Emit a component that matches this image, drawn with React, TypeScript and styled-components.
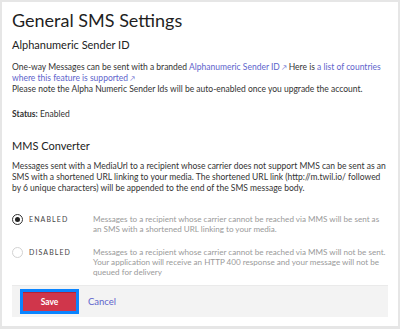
import React from "react";
import styled, { createGlobalStyle } from "styled-components";

const Global = createGlobalStyle`
  html, body { margin: 0; padding: 0; background: #e6e6e6; }
  body { font-family: Lato, "Open Sans", "Liberation Sans", sans-serif; color: #2a2a2a; }
  * { box-sizing: border-box; }
`;

const Panel = styled.div`
  margin: 2px 2px 3px 2px;
  height: 324px;
  background: #fff;
  padding: 0 10px 9px 10px;
  display: flex;
  flex-direction: column;
`;

const Title = styled.h1`
  margin: 6px 0 0 0;
  font-size: 18px;
  font-weight: 400;
  line-height: 24px;
  color: #1f1f1f;
`;

const SectionTitle = styled.h2<{ $top: number }>`
  margin: ${(p) => p.$top}px 0 0 0;
  font-size: 11px;
  font-weight: 400;
  line-height: 14px;
  color: #222;
`;

const Para = styled.p<{ $top: number }>`
  margin: ${(p) => p.$top}px 0 0 0;
  font-size: 8.5px;
  line-height: 11px;
  color: #333;
`;

const Link = styled.a`
  color: #6064cc;
  text-decoration: none;
`;

const Ext = styled.span`
  display: inline-block;
  font-size: 6.5px;
  line-height: 1;
  margin: 0 2px 0 2px;
`;

const Bold = styled.b`
  font-weight: 700;
`;

const OptionRow = styled.div<{ $top: number }>`
  margin-top: ${(p) => p.$top}px;
  display: grid;
  grid-template-columns: 81px 1fr;
  align-items: start;
`;

const OptionLabel = styled.label`
  display: flex;
  align-items: center;
  gap: 6px;
  height: 10px;
  font-size: 7px;
  letter-spacing: 1.1px;
  color: #444;
  text-transform: uppercase;
`;

const Radio = styled.span<{ $checked?: boolean }>`
  width: 11px;
  height: 11px;
  border-radius: 50%;
  border: 1px solid ${(p) => (p.$checked ? "#333" : "#d2d2d2")};
  display: flex;
  align-items: center;
  justify-content: center;
  flex: none;
  &::after {
    content: "";
    display: ${(p) => (p.$checked ? "block" : "none")};
    width: 5px;
    height: 5px;
    border-radius: 50%;
    background: #222;
  }
`;

const OptionDesc = styled.div`
  font-size: 8.1px;
  line-height: 10px;
  color: #9a9a9a;
`;

const Footer = styled.div`
  margin-top: auto;
  height: 32px;
  background: #f3f3f3;
  border-top: 1px solid #eaeaea;
  display: flex;
  align-items: center;
  padding-left: 8px;
  gap: 9px;
`;

const SaveButton = styled.button`
  width: 59px;
  height: 25px;
  background: #d0364b;
  border: 3px solid #0a84ff;
  box-shadow: inset 0 1px 0 #b52238;
  color: #fff;
  font-family: inherit;
  font-size: 8.5px;
  font-weight: 700;
  padding: 0;
`;

const CancelLink = styled.a`
  font-size: 9.5px;
  color: #6064cc;
`;

const mmsText =
  "Messages sent with a MediaUrl to a recipient whose carrier does not support MMS can be sent as an SMS with a shortened URL linking to your media. The shortened URL link (http://m.twil.io/ followed by\u00a06 unique characters) will be appended to the end of the SMS message body.";

export default function App() {
  return (
    <>
      <Global />
      <Panel>
        <Title>General SMS Settings</Title>
        <SectionTitle $top={6}>Alphanumeric Sender ID</SectionTitle>
        <Para $top={10}>
          One-way Messages can be sent with a branded{" "}
          <Link>Alphanumeric Sender ID<Ext>↗</Ext></Link>Here is{" "}
          <Link>a list of countries where this feature is supported<Ext>↗</Ext></Link>
          <br />
          Please note the Alpha Numeric Sender Ids will be auto-enabled once you upgrade the account.
        </Para>
        <Para $top={13.5}>
          <Bold>Status:</Bold> Enabled
        </Para>
        <SectionTitle $top={19.5}>MMS Converter</SectionTitle>
        <Para $top={7.5}>{mmsText}</Para>
        <OptionRow $top={20.5}>
          <OptionLabel>
            <Radio $checked />
            Enabled
          </OptionLabel>
          <OptionDesc>
            Messages to a recipient whose carrier cannot be reached via MMS will be sent as an SMS with a shortened URL linking to your media.
          </OptionDesc>
        </OptionRow>
        <OptionRow $top={13}>
          <OptionLabel>
            <Radio />
            Disabled
          </OptionLabel>
          <OptionDesc>
            Messages to a recipient whose carrier cannot be reached via MMS will not be sent. Your application will receive an HTTP 400 response and your message will not be queued for delivery
          </OptionDesc>
        </OptionRow>
        <Footer>
          <SaveButton>Save</SaveButton>
          <CancelLink>Cancel</CancelLink>
        </Footer>
      </Panel>
    </>
  );
}
